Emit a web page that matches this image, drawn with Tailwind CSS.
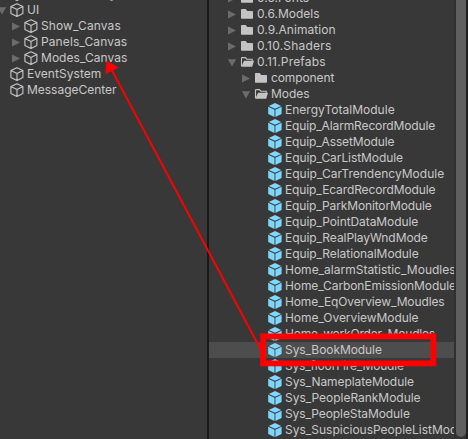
<!DOCTYPE html>
<html lang="en">
<head>
<meta charset="utf-8">
<title>Hierarchy and Project</title>
<script src="https://cdn.jsdelivr.net/npm/@tailwindcss/browser@4"></script>
</head>
<body class="bg-[#383838] overflow-hidden">
<svg class="hidden">
  <symbol id="right" viewBox="0 0 8 9"><path d="M0 0.5L8 4.5L0 8.5Z" fill="#6b6b6b"/></symbol>
  <symbol id="down" viewBox="0 0 8 9"><path d="M-.2 1.2H8.2L4 8.5Z" fill="#6b6b6b"/></symbol>
  <symbol id="object" viewBox="0 0 14 14"><path d="M7 .7L12.9 3.5V10.5L7 13.4L.9 10.5V3.5ZM.9 3.5L7 6.5L12.9 3.5M7 6.5V13.3" fill="none" stroke="#c8c8c8" stroke-width="1.1" stroke-linejoin="round"/></symbol>
  <symbol id="prefab" viewBox="0 0 14 14"><path d="M7 .1L13.2 2.9L7 5.8L.8 2.9Z" fill="#83d6fd"/><path d="M.2 3.7L6.5 6.7V14L.2 11.1Z" fill="#7fd6fd"/><path d="M13.6 3.7L7.4 6.7V14L13.6 11.1Z" fill="#7fd6fd"/></symbol>
  <symbol id="folder" viewBox="0 0 14 14"><path d="M1 3Q1 2.1 1.7 2.1H5.7L7.2 4H12.3Q13 4 13 4.7V11.1Q13 11.8 12.3 11.8H1.7Q1 11.8 1 11.1Z" fill="#c4c4c4"/></symbol>
  <symbol id="open" viewBox="0 0 14 14"><path d="M1.5 11.3V3.2Q1.5 2.6 2.1 2.6H5.5L6.8 4.2H12.2V6" fill="none" stroke="#c4c4c4" stroke-width="1.1"/><path d="M4 5.8H14L12.2 11.8H1.4Z" fill="#c4c4c4"/></symbol>
</svg>
<div class="relative flex h-[439px] w-[468px] overflow-hidden font-['Inter',sans-serif] text-[12px] leading-4 text-[#c8c8c8]">
  <div class="w-[207px] shrink-0 overflow-hidden">
    <div class="flex h-[2px] items-end overflow-hidden pl-[10px]">
      <svg class="h-[14px] w-[14px] -translate-y-px shrink-0"><use href="#object"/></svg>
      <svg class="ml-[85px] h-[2px] w-[6px]"><path d="M.5 -.5Q2.7 1.6 5 -.8" fill="none" stroke="#c8c8c8"/></svg>
    </div>
    <div id="hierarchy"></div>
  </div>
  <div class="w-[2px] shrink-0 bg-[#191919]"></div>
  <div class="h-full w-[245px] shrink-0 overflow-hidden">
    <div id="project" class="-mt-[10px]"></div>
  </div>
  <div class="flex w-[14px] shrink-0">
    <div class="w-[12px] border-l-2 border-[#303030] bg-[#333333] pb-[2px]"><div class="h-full rounded-b-full bg-[#5f5f5f]"></div></div>
    <div class="w-[2px] bg-[#1f1f1f]"></div>
  </div>
  <svg class="absolute inset-0" width="468" height="439" viewBox="0 0 468 439">
    <rect x="263.1" y="336.4" width="170.3" height="27" fill="none" stroke="#ff0000" stroke-width="5.8"/>
    <path d="M112 70.5L261 350" stroke="#ff0000" stroke-width="1.9" fill="none"/>
    <path d="M106.5 60.8L118.9 67.5L105.3 74.3Z" fill="#ff0000"/>
  </svg>
</div>
<script>
const pads = { root: '-ml-[2px]', child: 'ml-[12px]', folder: 'ml-[19px]', subfolder: 'ml-[33px]', asset: 'ml-[47px]' };
// The last value of each row is its label's letter spacing in pixels.
function row(icon, arrow, pad, label, spacing) {
  return `<div class="flex h-4 items-center whitespace-nowrap ${label === 'Sys_BookModule' ? 'bg-[#4d4d4d]' : ''}">
    <svg class="${pads[pad]} mr-[4px] h-[9px] w-2 shrink-0">${arrow ? `<use href="#${arrow}" width="8" height="9"/>` : ''}</svg>
    <svg class="mr-[3px] h-[14px] w-[14px] shrink-0"><use href="#${icon}"/></svg><span style="letter-spacing:${spacing}px">${label}</span></div>`;
}
document.getElementById('hierarchy').innerHTML =
  row('object', 'down', 'root', 'UI', 0) +
  [['Show_Canvas', 0.1], ['Panels_Canvas', 0.1], ['Modes_Canvas', 0.04]].map(r => row('object', 'right', 'child', ...r)).join('') +
  [['EventSystem', 0.05], ['MessageCenter', -0.02]].map(r => row('object', '', 'root', ...r)).join('');
document.getElementById('project').innerHTML =
  [['0.5.Fonts', 0], ['0.6.Models', 0.01], ['0.9.Animation', 0.06], ['0.10.Shaders', 0.2]].map(r => row('folder', 'right', 'folder', ...r)).join('') +
  row('open', 'down', 'folder', '0.11.Prefabs', 0.18) +
  row('folder', 'right', 'subfolder', 'component', -0.1) +
  row('open', 'down', 'subfolder', 'Modes', -0.05) +
  [['EnergyTotalModule', 0.02], ['Equip_AlarmRecordModule', -0.13], ['Equip_AssetModule', -0.14], ['Equip_CarListModule', -0.08],
   ['Equip_CarTrendencyModule', 0.01], ['Equip_EcardRecordModule', -0.11], ['Equip_ParkMonitorModule', -0.13],
   ['Equip_PointDataModule', -0.09], ['Equip_RealPlayWndMode', -0.07], ['Equip_RelationalModule', -0.07],
   ['Home_alarmStatistic_Moudles', 0], ['Home_CarbonEmissionModule', -0.1], ['Home_EqOverview_Moudles', -0.12],
   ['Home_OverviewModule', -0.06], ['Home_workOrder_Moudles', -0.19], ['Sys_BookModule', -0.07], ['Sys_floorFire_Moudle', -0.17],
   ['Sys_NameplateModule', -0.06], ['Sys_PeopleRankModule', -0.03], ['Sys_PeopleStaModule', -0.09],
   ['Sys_SuspiciousPeopleListModule', 0]]
   .map(r => row('prefab', '', 'asset', ...r)).join('');
</script>
</body>
</html>
